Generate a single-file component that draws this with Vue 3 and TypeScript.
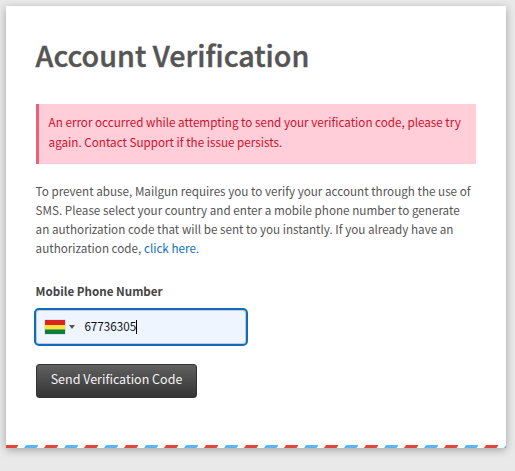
<script setup lang="ts">
import { onMounted, ref } from 'vue'

const phone = ref('67736305')
const errorLines: string[] = [
  'An error occurred while attempting to send your verification code, please try',
  'again. Contact Support if the issue persists.',
]
const introLines: string[] = [
  'To prevent abuse, Mailgun requires you to verify your account through the use of',
  'SMS. Please select your country and enter a mobile phone number to generate',
  'an authorization code that will be sent to you instantly. If you already have an',
]
const field = ref<HTMLElement | null>(null)
onMounted(() => field.value?.focus())
</script>

<template>
  <main class="page">
    <section class="card">
      <div class="content">
        <h1>Account Verification</h1>
        <div class="alert" role="alert">
          <span v-for="line in errorLines" :key="line" class="line">{{ line }}</span>
        </div>
        <p class="intro">
          <span v-for="line in introLines" :key="line" class="line">{{ line }}</span>
          <span class="line">authorization code, <a href="#">click here.</a></span>
        </p>
        <div class="label">Mobile Phone Number</div>
        <div ref="field" class="field" tabindex="0">
          <svg class="flag" width="20" height="14" viewBox="0 0 20 14">
            <path fill="#dc241f" d="M0 0h20v5H0z" />
            <path fill="#f9e33c" d="M0 5h20v5H0z" />
            <path fill="#0b7d3c" d="M0 9.5h20V14H0z" />
          </svg>
          <span class="arrow"></span>
          <span class="number">{{ phone }}</span>
          <span class="caret"></span>
        </div>
        <button type="button">Send Verification Code</button>
      </div>
      <svg class="stripes" width="500" height="3">
        <defs>
          <pattern id="airmail" width="40" height="3" patternUnits="userSpaceOnUse">
            <path fill="#e2453c" d="M0 0h12.5L10.5 3H-2zM40 0h2v3h-4z" />
            <path fill="#5ab4f5" d="M20 0h12.5l-2 3H18z" />
          </pattern>
        </defs>
        <rect width="500" height="3" fill="url(#airmail)" />
      </svg>
    </section>
  </main>
</template>

<style>
body {
  background: #e9e9e9;
}
</style>

<style scoped>
.page {
  box-sizing: border-box;
  height: 471px;
  padding: 6px 9px 23px 6px;
  overflow: hidden;
  font-family: "Noto Sans CJK SC", sans-serif;
  font-size: 11.68px;
  color: #555;
}
.card {
  display: flex;
  flex-direction: column;
  justify-content: space-between;
  width: 500px;
  height: 442px;
  background: #fff;
  box-shadow: 0 2px 8px rgba(0, 0, 0, 0.3);
}
.content {
  display: flex;
  flex-direction: column;
  align-items: flex-start;
  padding: 29px 30px 0;
}
h1 {
  margin: 0 0 29px -0.4px;
  font-size: 28.7px;
  line-height: 40px;
  font-weight: 500;
  white-space: nowrap;
  -webkit-text-stroke: 0.45px #555;
}
.line {
  display: block;
  white-space: nowrap;
}
.alert {
  box-sizing: border-box;
  width: 440px;
  height: 60px;
  padding: 8px 9.6px;
  border-left: 3px solid #e8627d;
  background: #ffced8;
  color: #cf102d;
  line-height: 20px;
}
.intro {
  margin: 17px 0 24px -0.4px;
  line-height: 19px;
}
.intro a {
  color: #1070c4;
  text-decoration: none;
}
.label {
  margin-left: -0.4px;
  line-height: 20px;
  font-size: 11.62px;
  font-weight: 700;
  color: #444;
}
.field {
  display: flex;
  align-items: center;
  box-sizing: border-box;
  width: 214px;
  height: 38px;
  margin: 7px 0 18px -2px;
  padding-left: 9px;
  border: 2px solid #0f6cbd;
  border-radius: 5px;
  background: #eef5ff;
  box-shadow: inset 0 0 0 1px #c3cbd8;
  color: #111;
  outline: none;
}
.number {
  line-height: 20px;
  margin-top: -2px;
}
.flag {
  box-shadow: 0 0 1px #888;
}
.arrow {
  margin: 0 9.4px 0 4px;
  border: 3px solid transparent;
  border-top: 4px solid #555;
  border-bottom: 0;
}
.caret {
  width: 1px;
  height: 14px;
  background: #000;
}
button {
  box-sizing: border-box;
  width: 161px;
  height: 34px;
  padding: 0 0 5px;
  border: 1px solid #333;
  border-radius: 3px;
  background: linear-gradient(#606060, #343434);
  color: #f4f4f4;
  font: inherit;
  font-size: 12.5px;
  line-height: 20px;
  white-space: nowrap;
}
.stripes {
  display: block;
}
</style>
